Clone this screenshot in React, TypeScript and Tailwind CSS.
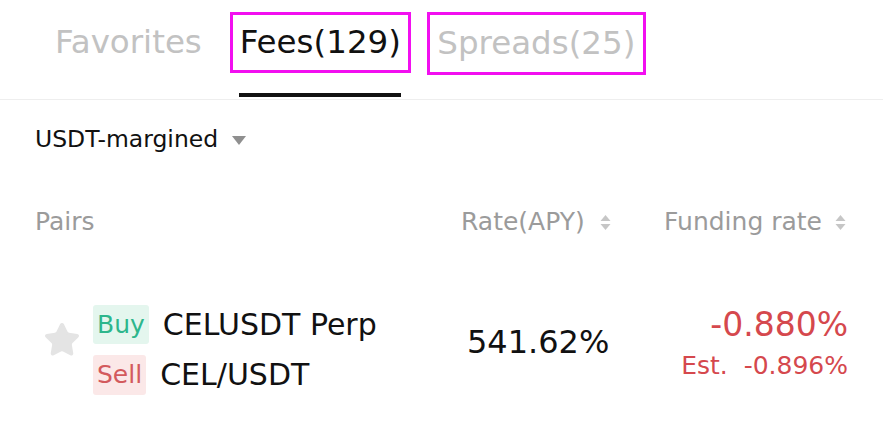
import { Star } from 'lucide-react'

function SortIcon({ className = '' }: { className?: string }) {
  return (
    <svg width="11" height="17" viewBox="0 0 11 17" className={className}>
      <path d="M5.5 1 L10.5 7 H0.5 Z" fill="#c6c6c6" />
      <path d="M5.5 16 L10.5 10 H0.5 Z" fill="#c6c6c6" />
    </svg>
  )
}

export default function App() {
  return (
    <div className="h-[422px] w-[883px] overflow-hidden bg-white font-['DejaVu_Sans',sans-serif]">
      {/* Tabs */}
      <div className="flex h-[99px] items-start pl-[55px] pt-[12px]">
        <div className="flex h-[61px] items-center text-[32.5px] text-[#c2c2c2]">Favorites</div>
        <div className="ml-[28px] flex flex-col items-center">
          <div className="flex h-[61px] w-[181px] items-center justify-center border-[3px] border-[#f20ff0] text-[32.5px] text-[#111]">
            Fees(129)
          </div>
          <div className="mt-[20px] h-[4px] w-[162px] bg-[#111]" />
        </div>
        <div className="ml-[16px] flex h-[63px] w-[219px] items-center justify-center border-[3px] border-[#f20ff0] text-[32.5px] text-[#c2c2c2]">
          Spreads(25)
        </div>
      </div>
      <div className="h-px w-full bg-[#eeeeee]" />

      {/* Filter */}
      <div className="flex h-[80px] items-center pl-[35px] text-[23.5px] text-[#111]">
        USDT-margined
        <svg width="14" height="9" viewBox="0 0 14 9" className="ml-[14px] mt-[1px]">
          <path d="M0 0 H14 L7 9 Z" fill="#8f8f8f" />
        </svg>
      </div>

      {/* Header */}
      <div className="flex h-[84px] items-center pl-[35px] pr-[37px] text-[25px] text-[#9b9b9b]">
        <div className="flex-1">Pairs</div>
        <div className="flex w-[151px] items-center">
          Rate(APY)
          <SortIcon className="ml-[15px]" />
        </div>
        <div className="ml-[52px] flex items-center">
          Funding rate
          <SortIcon className="ml-[13px]" />
        </div>
      </div>

      {/* Row */}
      <div className="flex pl-[43px] pr-[35px] pt-[41px]">
        <div className="flex flex-1 items-center">
          <Star size={38} fill="#e4e4e4" stroke="#e4e4e4" strokeWidth={1.5} strokeLinejoin="round" className="mt-[-20px]" />
          <div className="ml-[12px] flex flex-col gap-[11px]">
            <div className="flex items-center">
              <span className="flex h-[39px] items-center rounded-[3px] bg-[#e4f6ee] px-[4px] text-[25px] text-[#2db68c]">Buy</span>
              <span className="ml-[14px] text-[30px] leading-[39px] text-[#111]">CELUSDT Perp</span>
            </div>
            <div className="flex items-center">
              <span className="flex h-[40px] items-center rounded-[3px] bg-[#fbe8e8] px-[4px] text-[25px] text-[#d35a5d]">Sell</span>
              <span className="ml-[14px] text-[30px] leading-[40px] text-[#111]">CEL/USDT</span>
            </div>
          </div>
        </div>
        <div className="mt-[17px] w-[151px] pl-[7px] text-[32px] leading-[40px] text-[#111]">541.62%</div>
        <div className="ml-[67px] flex w-[170px] flex-col items-end pt-[1px]">
          <div className="text-[33px] leading-[38px] text-[#d5484d]">-0.880%</div>
          <div className="mt-[7px] text-[25px] leading-[30px] text-[#d5484d]">Est.&nbsp;&nbsp;-0.896%</div>
        </div>
      </div>
    </div>
  )
}
